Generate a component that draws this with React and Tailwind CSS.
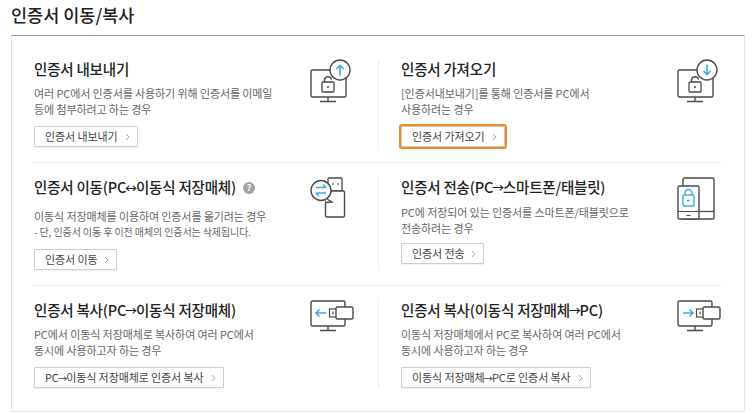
const font = { fontFamily: '"Noto Sans CJK KR", "Noto Sans", sans-serif' };

const GRAY = '#4a4a4a';
const BLUE = '#3fa9e0';

const Arrow = ({ d }) => (
  <path d={d} fill="none" stroke={BLUE} strokeWidth="1.6" />
);

const Lock = () => (
  <>
    <rect x="12" y="23" width="12" height="10" rx="1" fill="white" stroke={GRAY} strokeWidth="1.3" />
    <path d="M14.500 23v-2.500a3.600 3.600 0 0 1 7 0" fill="none" stroke={GRAY} strokeWidth="1.3" />
    <circle cx="18" cy="28" r="1" fill={GRAY} />
  </>
);

const CertIcon = ({ arrow }) => (
  <svg width="42" height="44" viewBox="0 0 42 44">
    <rect x="1" y="11" width="35" height="27" rx="1.500" fill="white" stroke={GRAY} strokeWidth="1.4" />
    <path d="M18 38v4M10 42.500h16" fill="none" stroke={GRAY} strokeWidth="1.4" />
    <Lock />
    <circle cx="30" cy="11" r="10" fill="white" stroke={GRAY} strokeWidth="1.4" />
    <Arrow d={arrow} />
  </svg>
);

const UsbIcon = () => (
  <svg width="36" height="42" viewBox="0 0 36 42">
    <rect x="18" y="1" width="14" height="13" rx="1" fill="white" stroke={GRAY} strokeWidth="1.3" />
    <path d="M22 7h2M27 7h2" stroke={GRAY} strokeWidth="1.2" />
    <rect x="15.500" y="14" width="19" height="26" rx="1.500" fill="white" stroke={GRAY} strokeWidth="1.4" />
    <circle cx="11" cy="13.500" r="10" fill="white" stroke={GRAY} strokeWidth="1.4" />
    <path d="M16 21.500l6 3.500-6.500 .5" fill="white" stroke={GRAY} strokeWidth="1.3" />
    <Arrow d="M6 10.500h10M13 7.500l3 3M16 16H6M9 19l-3-3" />
  </svg>
);

const TabletIcon = () => (
  <svg width="38" height="44" viewBox="0 0 38 44">
    <rect x="6" y="1" width="31" height="41" rx="1.500" fill="white" stroke={GRAY} strokeWidth="1.4" />
    <path d="M21 34.500h16" stroke={GRAY} strokeWidth="1.2" />
    <rect x="1" y="9" width="21" height="33" rx="1.500" fill="white" stroke={GRAY} strokeWidth="1.4" />
    <path d="M1 34.500h21M9.500 38.500h4" stroke={GRAY} strokeWidth="1.2" />
    <rect x="6" y="18" width="11" height="11" rx="1.500" fill="white" stroke={BLUE} strokeWidth="1.4" />
    <path d="M8 18v-2a3.500 3.500 0 0 1 7 0v2" fill="none" stroke={BLUE} strokeWidth="1.4" />
    <path d="M10 23.500h3" stroke={BLUE} strokeWidth="1.4" />
  </svg>
);

const UsbMonitorIcon = ({ reverse }) => (
  <svg width="44" height="33" viewBox="0 0 44 33">
    <rect x="1" y="1" width="34" height="25" rx="1.500" fill="white" stroke={GRAY} strokeWidth="1.4" />
    <path d="M18 26v4M10 30.500h16" fill="none" stroke={GRAY} strokeWidth="1.4" />
    <rect x="19.500" y="9" width="7" height="8" fill="white" stroke={GRAY} strokeWidth="1.2" />
    <path d="M22 11.500h2v3h-2z" fill={GRAY} opacity="0.6" />
    <rect x="26" y="7" width="17" height="12" rx="1.500" fill="white" stroke={GRAY} strokeWidth="1.4" />
    {reverse
      ? <Arrow d="M6 13h10M12.500 9.500l3.500 3.500-3.500 3.500" />
      : <Arrow d="M16 13H6M9.500 9.500 6 13 9.500 16.500" />}
  </svg>
);

const Help = () => (
  <span className="ml-[7px] flex h-3 w-3 items-center justify-center rounded-full bg-[#a3a3a3] text-[9px] font-bold leading-none text-white">?</span>
);

const Btn = ({ label, focus }) => (
  <button className={`flex h-[21px] items-center gap-[7px] rounded-[1px] border bg-white pl-[10px] pr-[7px] text-[11px] tracking-[-0.1px] text-[#444] shadow-[0_1px_1px_rgba(0,0,0,0.06)] ${focus ? 'border-[#c9c9c9] outline-2 outline-[#f08a24]' : 'border-[#cfcfcf]'}`}>
    <span className="whitespace-nowrap">{label}</span>
    <svg width="5" height="8" viewBox="0 0 5 8"><path d="M1 1l3 3-3 3" fill="none" stroke="#aaa" strokeWidth="1" /></svg>
  </button>
);

const TitleArrow = ({ c }) => <span className="-mx-[1px] text-[12px]">{c}</span>;
const BtnArrow = () => <span className="-mx-[1px] text-[9.500px]">→</span>;

const Cell = ({ title, help, lines, note, btn, focus, icon, iconClass, descGap = 'mt-[6px]', btnGap = 'mt-[10px]', className }) => (
  <div className={`relative ${className}`}>
    <h3 className="flex items-center whitespace-pre text-[14.500px] font-medium leading-5 tracking-[-0.2px] text-[#222]">
      <span>{title}</span>{help && <Help />}
    </h3>
    <div className={`text-[11px] leading-4 tracking-[-0.1px] text-[#666] ${descGap}`}>
      {lines.map((l) => <p key={l}>{l}</p>)}
      {note && <p className="text-[10px]">{note}</p>}
    </div>
    <div className={`flex ${btnGap}`}><Btn label={btn} focus={focus} /></div>
    <div className={`absolute top-0 ${iconClass}`}>{icon}</div>
  </div>
);

export default function App() {
  return (
    <div className="h-[414px] w-[754px] overflow-hidden bg-white pl-[11px] pr-[9px]" style={font}>
      <h2 className="flex h-[35px] items-center pb-[6px] text-[17.500px] font-medium leading-none text-[#222]">인증서 이동/복사</h2>
      <div className="h-[377px] border border-t-[#9a9a9a] border-x-[#e4e4e4] border-b-[#e4e4e4] px-[22px]">
        <div className="grid h-[127px] grid-cols-[345px_1fr] border-b border-dotted border-[#d8d8d8] pt-[23px] pb-[14px]">
          <Cell
            title="인증서 내보내기"
            lines={['여러 PC에서 인증서를 사용하기 위해 인증서를 이메일', '등에 첨부하려고 하는 경우']}
            btn="인증서 내보내기"
            icon={<CertIcon arrow="M30 16.500V6.500M26.500 10l3.500-3.500 3.500 3.500" />}
            iconClass="left-[276px]"
            btnGap="mt-[9px]"
            className="border-r border-dotted border-[#dcdcdc]"
          />
          <Cell
            title="인증서 가져오기"
            lines={['[인증서내보내기]를 통해 인증서를 PC에서', '사용하려는 경우']}
            btn="인증서 가져오기"
            focus
            icon={<CertIcon arrow="M30 5.500v10M26.500 12l3.500 3.500 3.500-3.500" />}
            iconClass="left-[298px]"
            btnGap="mt-[9px]"
            className="pl-[22px]"
          />
        </div>
        <div className="grid h-[123px] grid-cols-[345px_1fr] border-b border-dotted border-[#d8d8d8] pt-[14px] pb-[15px]">
          <Cell
            title={<>인증서 이동(PC<TitleArrow c="↔" />이동식 저장매체)</>}
            help
            lines={['이동식 저장매체를 이용하여 인증서를 옮기려는 경우']}
            note="- 단, 인증서 이동 후 이전 매체의 인증서는 삭제됩니다."
            btn="인증서 이동"
            icon={<UsbIcon />}
            iconClass="left-[276px]"
            descGap="mt-[10px]"
            btnGap="mt-[9px]"
            className="border-r border-dotted border-[#dcdcdc]"
          />
          <Cell
            title={<>인증서 전송(PC<TitleArrow c="→" />스마트폰/태블릿)</>}
            lines={['PC에 저장되어 있는 인증서를 스마트폰/태블릿으로', '전송하려는 경우']}
            btn="인증서 전송"
            icon={<TabletIcon />}
            iconClass="left-[298px]"
            btnGap="mt-[7px]"
            className="pl-[22px]"
          />
        </div>
        <div className="grid h-[125px] grid-cols-[345px_1fr] pt-[14px] pb-[22px]">
          <Cell
            title={<>인증서 복사(PC<TitleArrow c="→" />이동식 저장매체)</>}
            lines={['PC에서 이동식 저장매체로 복사하여 여러 PC에서', '동시에 사용하고자 하는 경우']}
            btn={<>PC<BtnArrow />이동식 저장매체로 인증서 복사</>}
            icon={<UsbMonitorIcon />}
            iconClass="left-[276px]"
            descGap="mt-[5px]"
            btnGap="mt-[9px]"
            className="border-r border-dotted border-[#dcdcdc]"
          />
          <Cell
            title={<>인증서 복사(이동식 저장매체<TitleArrow c="→" />PC)</>}
            lines={['이동식 저장매체에서 PC로 복사하여 여러 PC에서', '동시에 사용하고자 하는 경우']}
            btn={<>이동식 저장매체<BtnArrow />PC로 인증서 복사</>}
            icon={<UsbMonitorIcon reverse />}
            iconClass="left-[298px]"
            descGap="mt-[5px]"
            btnGap="mt-[9px]"
            className="pl-[22px]"
          />
        </div>
      </div>
    </div>
  );
}
